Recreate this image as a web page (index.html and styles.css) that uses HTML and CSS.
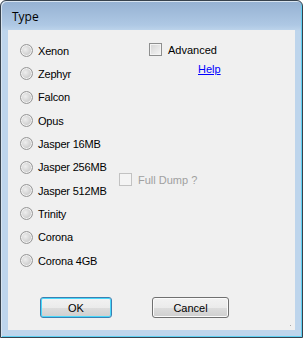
FILE: index.html
```html
<!DOCTYPE html>
<html>
<head>
  <title>Type</title>
  <link rel="stylesheet" href="styles.css">
</head>
<body>

<div class="window">
  <div class="titlebar"><span class="title">Type</span></div>

  <div class="client">
    <div class="options">
      <ul class="radios">
        <li><span class="radio"></span>Xenon</li>
        <li><span class="radio"></span>Zephyr</li>
        <li><span class="radio"></span>Falcon</li>
        <li><span class="radio"></span>Opus</li>
        <li><span class="radio"></span>Jasper 16MB</li>
        <li><span class="radio"></span>Jasper 256MB</li>
        <li><span class="radio"></span>Jasper 512MB</li>
        <li><span class="radio"></span>Trinity</li>
        <li><span class="radio"></span>Corona</li>
        <li><span class="radio"></span>Corona 4GB</li>
      </ul>

      <div class="extras">
        <div class="check advanced"><span class="box"></span>Advanced</div>
        <a class="help" href="#">Help</a>
        <div class="check disabled fulldump"><span class="box"></span>Full Dump ?</div>
      </div>
    </div>

    <div class="buttons">
      <button class="btn default">OK</button>
      <button class="btn cancel">Cancel</button>
    </div>

    <span class="grip"></span>
  </div>
</div>

</body>
</html>
```

FILE: styles.css
```css
body {
  margin: 0;
  background: #ffffff;
}

.window {
  width: 303px;
  height: 338px;
  box-sizing: border-box;
  border: 1px solid #37424d;
  border-radius: 6px 6px 0 0;
  background: linear-gradient(#95b1d2 0px, #aec8e4 24px, #bed5ec 30px);
  box-shadow: inset 1px 1px 0 #d8e4f0, inset -1px -1px 0 #5fd0f2;
  display: flex;
  flex-direction: column;
}

.titlebar {
  height: 29px;
  padding-left: 11px;
  display: flex;
  align-items: center;
}
.title {
  font-family: "Open Sans", "Noto Sans", sans-serif;
  font-size: 12px;
  color: #000;
  padding-top: 2px;
}

.client {
  position: relative;
  margin: 0 7px 0 7px;
  height: 300px;
  background: #f0f0f0;
  font-family: "Liberation Sans", Arial, sans-serif;
  font-size: 11px;
  color: #000;
  display: flex;
  flex-direction: column;
}

.options {
  display: flex;
}

.radios {
  list-style: none;
  margin: 0;
  padding: 9px 0 0 12px;
  width: 99px;
}
.radios li {
  height: 23.33px;
  display: flex;
  align-items: center;
  white-space: nowrap;
  letter-spacing: -0.2px;
}
.radio {
  width: 11px;
  height: 11px;
  border: 1px solid #979797;
  border-radius: 50%;
  background: radial-gradient(circle at 40% 40%, #eeeeee 0, #d2d2d2 55%, #b8b8b8 100%);
  box-shadow: inset 0 0 0 1px #f2f2f2;
  margin-right: 5px;
  flex: none;
}

.extras {
  display: flex;
  flex-direction: column;
  align-items: flex-start;
  padding-top: 13px;
}
.check {
  display: flex;
  align-items: center;
  height: 13px;
  white-space: nowrap;
}
.box {
  width: 11px;
  height: 11px;
  border: 1px solid #8e8f8f;
  background: linear-gradient(135deg, #d4d4d4, #f6f6f6);
  box-shadow: inset 0 0 0 1px #f4f4f4;
  margin-right: 6px;
  flex: none;
}
.advanced {
  margin-left: 30px;
}
.help {
  margin: 7px 0 0 79px;
  line-height: 13px;
  color: #0000ff;
  text-decoration: underline;
}
.fulldump {
  margin-top: 97px;
}
.disabled {
  color: #a0a0a0;
}
.disabled .box {
  border-color: #c2c2c2;
  background: #f4f4f4;
  box-shadow: none;
}

.buttons {
  display: flex;
  gap: 40px;
  padding-left: 32px;
  margin-top: 25px;
}
.btn {
  height: 21px;
  padding: 0;
  font-family: "Liberation Sans", Arial, sans-serif;
  font-size: 11px;
  color: #000;
  border: 1px solid #707070;
  border-radius: 3px;
  background: linear-gradient(#f2f2f2 0%, #ebebeb 50%, #dddddd 51%, #cfcfcf 100%);
  box-shadow: inset 0 0 0 1px #fbfbfb;
}
.btn.default {
  width: 72px;
  border-color: #3c7fb1;
  box-shadow: inset 0 0 0 1px #48d8fb;
}
.btn.cancel {
  width: 77px;
}

.grip {
  position: absolute;
  right: 2px;
  bottom: 2px;
  width: 7px;
  height: 7px;
  background:
    radial-gradient(circle, #a8a8a8 0.8px, transparent 1px) 0 0 / 3px 3px;
  clip-path: polygon(100% 0, 100% 100%, 0 100%);
}
```
